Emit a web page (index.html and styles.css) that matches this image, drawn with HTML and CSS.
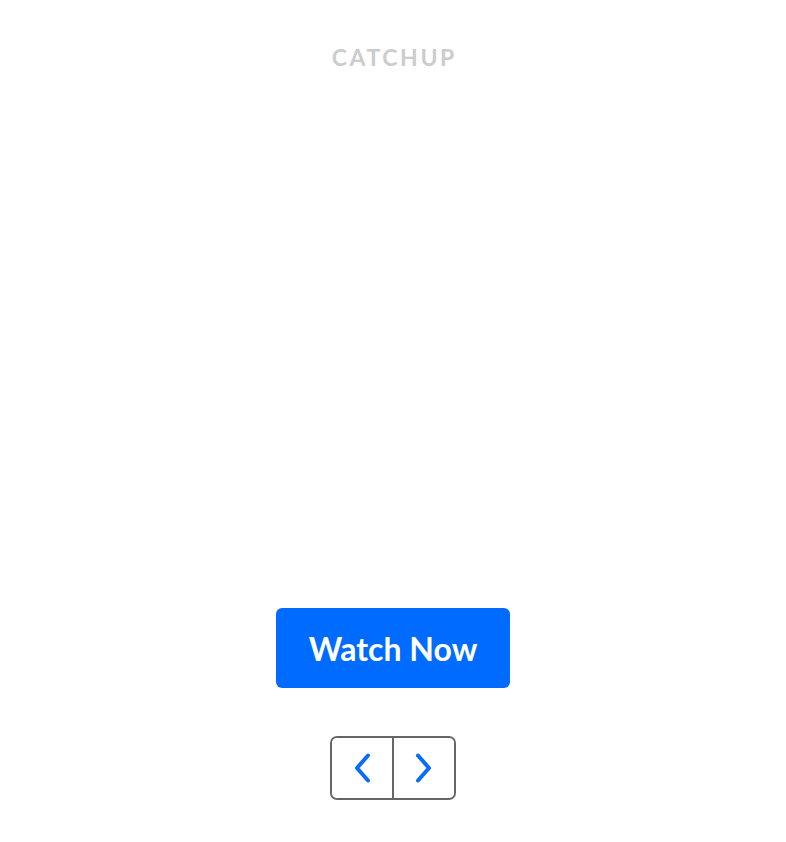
FILE: index.html
```html
<!DOCTYPE html>
<html>
<head>
<meta charset="utf-8">
<link rel="stylesheet" href="styles.css">
</head>
<body>
<main class="page">
  <h1 class="title">CATCHUP</h1>
  <div class="stage"></div>
  <button class="watch">Watch Now</button>
  <div class="pager">
    <button class="nav" aria-label="Previous">
      <svg class="chev" width="20" height="32" viewBox="0 0 20 32"><path d="M16 3.5 L5 16 L16 28.5" fill="none" stroke="#0a6cff" stroke-width="4" stroke-linecap="round" stroke-linejoin="round"/></svg>
    </button>
    <button class="nav" aria-label="Next">
      <svg class="chev" width="20" height="32" viewBox="0 0 20 32"><path d="M4 3.5 L15 16 L4 28.5" fill="none" stroke="#0a6cff" stroke-width="4" stroke-linecap="round" stroke-linejoin="round"/></svg>
    </button>
  </div>
</main>
</body>
</html>
```
FILE: styles.css
```css
html, body {
  margin: 0;
  padding: 0;
  background: #fff;
}
.page {
  width: 786px;
  display: flex;
  flex-direction: column;
  align-items: center;
  font-family: Lato, "Liberation Sans", sans-serif;
}
.title {
  margin: 42px 0 0;
  font-size: 23px;
  line-height: 30px;
  font-weight: 700;
  letter-spacing: 2.6px;
  color: #cccccc;
  padding-left: 2.6px;
}
.stage {
  height: 536px;
}
.watch {
  width: 234px;
  height: 80px;
  border: none;
  border-radius: 6px;
  background: #006cff;
  color: #fff;
  font-family: Lato, "Liberation Sans", sans-serif;
  font-weight: 700;
  font-size: 32px;
  padding: 0;
  cursor: pointer;
}
.pager {
  margin-top: 48px;
  display: flex;
  border: 2px solid #666;
  border-radius: 7px;
  overflow: hidden;
}
.nav {
  width: 60px;
  height: 60px;
  border: none;
  background: #fff;
  display: flex;
  align-items: center;
  justify-content: center;
  padding: 0;
}
.nav + .nav {
  width: 62px;
  border-left: 2px solid #666;
}
.chev {
  display: block;
  flex: none;
}
```
